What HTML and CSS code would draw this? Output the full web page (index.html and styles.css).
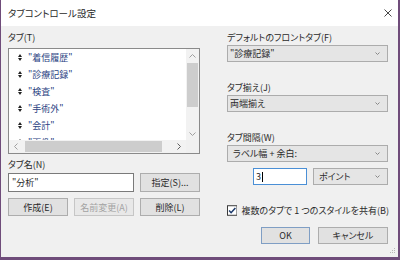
FILE: index.html
```html
<!DOCTYPE html>
<html lang="ja">
<head>
<meta charset="utf-8">
<title>タブコントロール設定</title>
<link rel="stylesheet" href="styles.css">
</head>
<body>
<div class="window">
  <div class="titlebar">
    <span class="title">タブコントロール設定</span>
    <svg class="close" width="8" height="8" viewBox="0 0 8 8"><path d="M0.5 0.5L7.5 7.5M7.5 0.5L0.5 7.5" stroke="#333" stroke-width="0.9" fill="none"/></svg>
  </div>
  <div class="content">
    <div class="col left">
      <div class="label">タブ(T)</div>
      <div class="listbox">
        <div class="items">
          <div class="item"><svg class="grip" width="4" height="7" viewBox="0 0 4 7"><path d="M0 3L2 0L4 3ZM0 4L2 7L4 4Z" fill="#222"/></svg><span>"着信履歴"</span></div>
          <div class="item"><svg class="grip" width="4" height="7" viewBox="0 0 4 7"><path d="M0 3L2 0L4 3ZM0 4L2 7L4 4Z" fill="#222"/></svg><span>"診療記録"</span></div>
          <div class="item"><svg class="grip" width="4" height="7" viewBox="0 0 4 7"><path d="M0 3L2 0L4 3ZM0 4L2 7L4 4Z" fill="#222"/></svg><span>"検査"</span></div>
          <div class="item"><svg class="grip" width="4" height="7" viewBox="0 0 4 7"><path d="M0 3L2 0L4 3ZM0 4L2 7L4 4Z" fill="#222"/></svg><span>"手術外"</span></div>
          <div class="item"><svg class="grip" width="4" height="7" viewBox="0 0 4 7"><path d="M0 3L2 0L4 3ZM0 4L2 7L4 4Z" fill="#222"/></svg><span>"会計"</span></div>
          <div class="item"><svg class="grip" width="4" height="7" viewBox="0 0 4 7"><path d="M0 3L2 0L4 3ZM0 4L2 7L4 4Z" fill="#222"/></svg><span>"画像"</span></div>
        </div>
        <div class="vscroll">
          <div class="arrow"><svg width="7" height="4" viewBox="0 0 7 4"><path d="M0.5 3.5L3.5 0.5L6.5 3.5" stroke="#a0a0a0" fill="none"/></svg></div>
          <div class="vthumb"></div>
          <div class="track"></div>
          <div class="arrow"><svg width="7" height="4" viewBox="0 0 7 4"><path d="M0.5 0.5L3.5 3.5L6.5 0.5" stroke="#a0a0a0" fill="none"/></svg></div>
        </div>
        <div class="hscroll">
          <div class="arrow"><svg width="4" height="7" viewBox="0 0 4 7"><path d="M3.5 0.5L0.5 3.5L3.5 6.5" stroke="#a0a0a0" fill="none"/></svg></div>
          <div class="hthumb"></div>
          <div class="track"></div>
          <div class="arrow"><svg width="4" height="7" viewBox="0 0 4 7"><path d="M0.5 0.5L3.5 3.5L0.5 6.5" stroke="#606060" fill="none"/></svg></div>
        </div>
        <div class="corner"></div>
      </div>
      <div class="label name-label">タブ名(N)</div>
      <div class="btn-grid">
        <div class="textbox wide">"分析"</div>
        <div class="btn">指定(S)...</div>
        <div class="btn">作成(E)</div>
        <div class="btn disabled">名前変更(A)</div>
        <div class="btn">削除(L)</div>
      </div>
    </div>
    <div class="col right">
      <div class="label">デフォルトのフロントタブ(F)</div>
      <div class="select"><span>"診療記録"</span><svg class="chev" width="5" height="3" viewBox="0 0 5 3"><path d="M0.5 0.5L2.5 2.5L4.5 0.5" stroke="#888" fill="none"/></svg></div>
      <div class="label gap-label">タブ揃え(J)</div>
      <div class="select"><span>両端揃え</span><svg class="chev" width="5" height="3" viewBox="0 0 5 3"><path d="M0.5 0.5L2.5 2.5L4.5 0.5" stroke="#888" fill="none"/></svg></div>
      <div class="label gap-label">タブ間隔(W)</div>
      <div class="select"><span class="pad">ラベル幅 + 余白:</span><svg class="chev" width="5" height="3" viewBox="0 0 5 3"><path d="M0.5 0.5L2.5 2.5L4.5 0.5" stroke="#888" fill="none"/></svg></div>
      <div class="unit-row">
        <div class="numbox">3<span class="caret"></span></div>
        <div class="select unit"><span class="pad">ポイント</span><svg class="chev" width="5" height="3" viewBox="0 0 5 3"><path d="M0.5 0.5L2.5 2.5L4.5 0.5" stroke="#888" fill="none"/></svg></div>
      </div>
      <div class="check-row">
        <svg class="checkbox" width="11" height="11" viewBox="0 0 11 11"><rect x="0.5" y="0.5" width="10" height="10" fill="#fff" stroke="#333"/><path d="M2.2 5.6L4.3 7.8L8.8 2.8" stroke="#1c3a6b" stroke-width="1.6" fill="none"/></svg>
        <span>複数のタブで 1 つのスタイルを共有(B)</span>
      </div>
      <div class="action-row">
        <div class="btn ok">OK</div>
        <div class="btn cancel">キャンセル</div>
      </div>
    </div>
  </div>
  <svg class="sizegrip" width="7" height="7" viewBox="0 0 7 7"><g fill="#b8b8b8"><rect x="5" y="0" width="1" height="1"/><rect x="3" y="2" width="1" height="1"/><rect x="5" y="2" width="1" height="1"/><rect x="1" y="4" width="1" height="1"/><rect x="3" y="4" width="1" height="1"/><rect x="5" y="4" width="1" height="1"/></g></svg>
</div>
</body>
</html>
```

FILE: styles.css
```css
* {
  box-sizing: border-box;
  margin: 0;
  padding: 0;
}

body {
  margin: 0;
  background: #fff;
  font-family: "Noto Sans CJK JP", "Noto Sans", sans-serif;
  font-size: 9px;
  color: #2a2a2a;
  font-feature-settings: "palt";
}

.window {
  position: relative;
  width: 400px;
  height: 260px;
  background: #f0f0f0;
  border-left: 1px solid #6f4c7a;
  border-right: 2px solid #6f4c7a;
  border-bottom: 3px solid #6f4c7a;
  display: flex;
  flex-direction: column;
}

.titlebar {
  height: 26px;
  background: #fff;
  display: flex;
  align-items: center;
  justify-content: space-between;
  padding: 0 6px 0 7px;
}

.title {
  font-size: 9.5px;
  line-height: 12px;
}

.content {
  display: flex;
  gap: 27px;
  padding: 6px 10px 0 7px;
}

.col {
  display: flex;
  flex-direction: column;
}

.left {
  width: 192px;
}

.right {
  width: 161px;
}

.label {
  height: 12px;
  line-height: 12px;
  white-space: nowrap;
}

/* list box */
.listbox {
  margin-top: 4px;
  height: 106px;
  border: 1px solid #8a8a8a;
  background: #fff;
  display: grid;
  grid-template-columns: 1fr 13px;
  grid-template-rows: 91px 13px;
  overflow: hidden;
}

.items {
  overflow: hidden;
  padding-left: 9px;
}

.item {
  height: 17px;
  display: flex;
  align-items: center;
  gap: 6px;
  color: #2a4282;
  white-space: nowrap;
}

.vscroll {
  background: #f2f2f2;
  display: flex;
  flex-direction: column;
}

.vscroll .arrow {
  height: 13px;
  display: flex;
  align-items: center;
  justify-content: center;
}

.vthumb {
  height: 44px;
  margin: 1px 1px 0 1px;
  background: #cdcdcd;
}

.track {
  flex: 1;
}

.hscroll {
  background: #f2f2f2;
  display: flex;
}

.hscroll .arrow {
  width: 14px;
  display: flex;
  align-items: center;
  justify-content: center;
}

.hthumb {
  width: 137px;
  margin: 1px 0 1px 2px;
  background: #cdcdcd;
}

.corner {
  background: #f0f0f0;
}

.name-label {
  margin-top: 5px;
}

.btn-grid {
  margin-top: 2px;
  display: grid;
  grid-template-columns: 60px 60px 60px;
  grid-template-rows: 19px 18px;
  column-gap: 6px;
  row-gap: 6px;
}

.textbox {
  background: #fff;
  border: 1px solid #7a7a7a;
  line-height: 17px;
  padding-left: 3px;
  white-space: nowrap;
}

.wide {
  grid-column: span 2;
}

.btn {
  background: #e1e1e1;
  border: 1px solid #adadad;
  display: flex;
  align-items: center;
  justify-content: center;
  white-space: nowrap;
}

.btn.disabled {
  background: #e8e8e8;
  border-color: #c6c6c6;
  color: #a3a3a3;
}

/* right column */
.select {
  margin-top: 1px;
  height: 17px;
  background: #e5e5e5;
  border: 1px solid #acacac;
  display: flex;
  align-items: center;
  justify-content: space-between;
  padding: 0 7px 0 2px;
  white-space: nowrap;
}

.select .pad {
  padding-left: 3px;
}

.gap-label {
  margin-top: 20px;
}

.unit-row {
  margin-top: 6px;
  display: flex;
  justify-content: flex-end;
  gap: 6px;
}

.numbox {
  width: 54px;
  height: 17px;
  background: #fff;
  border: 1px solid #4a8fd6;
  padding-left: 2px;
  line-height: 15px;
  display: flex;
  align-items: center;
}

.caret {
  display: inline-block;
  width: 1px;
  height: 10px;
  background: #000;
  margin-left: 1px;
}

.select.unit {
  width: 75px;
  height: 17px;
  margin-top: 0;
}

.check-row {
  margin-top: 19px;
  height: 12px;
  display: flex;
  align-items: center;
  justify-content: flex-end;
  gap: 4px;
  white-space: nowrap;
  margin-right: -1px;
}

.action-row {
  margin-top: 11px;
  display: flex;
  justify-content: flex-end;
  gap: 8px;
}

.action-row .btn {
  height: 17px;
}

.ok {
  width: 49px;
  border-color: #7f9ec4;
}

.cancel {
  width: 70px;
}

.sizegrip {
  position: absolute;
  right: 2px;
  bottom: 2px;
}
```
